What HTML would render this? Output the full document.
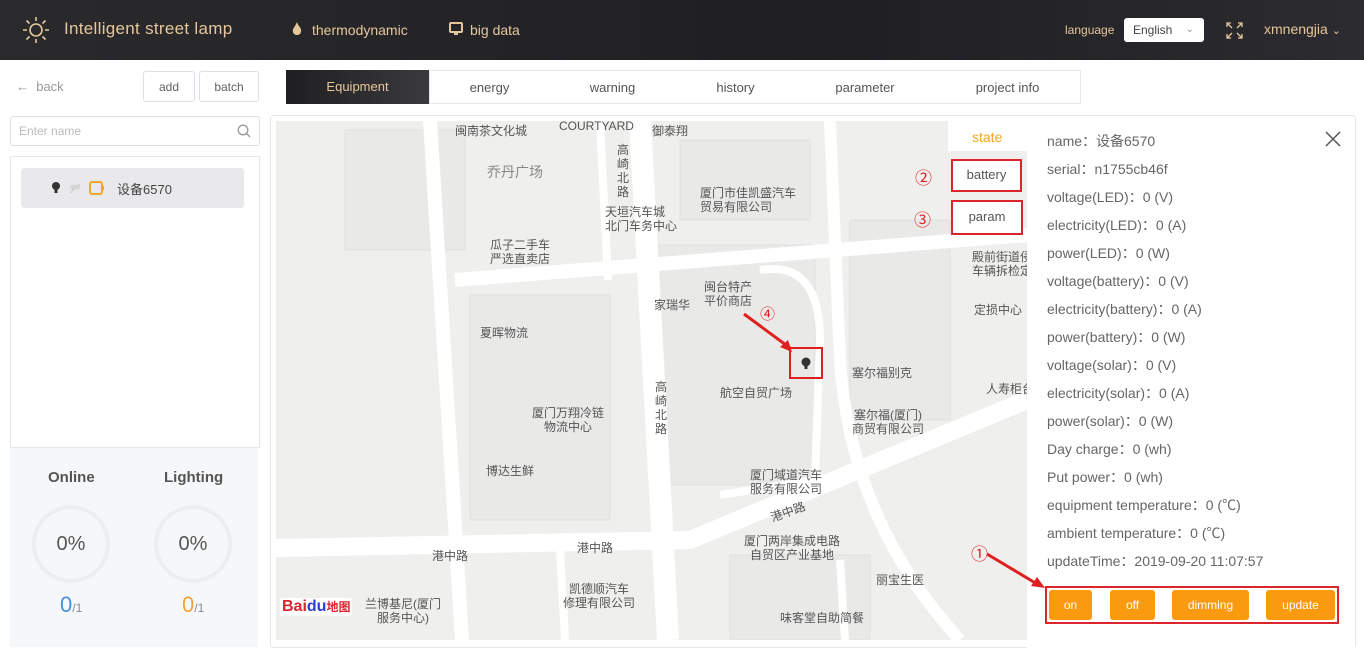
<!DOCTYPE html>
<html><head><meta charset="utf-8"><style>
*{box-sizing:border-box;margin:0;padding:0}
body{width:1364px;height:655px;overflow:hidden;background:#fff;font-family:"Liberation Sans","Noto Sans CJK SC",sans-serif;position:relative;color:#606266}
.abs{position:absolute}
.hdr{left:0;top:0;width:1364px;height:60px;background:linear-gradient(90deg,#2a2a2d,#1f1f22 60%,#2c2c30)}
.gold{color:#e6c79c}
.btn{position:absolute;border:1px solid #dcdfe6;border-radius:3px;background:#fff;font-size:12px;color:#606266;text-align:center;line-height:30px}
.tab{position:absolute;top:70px;height:34px;border:1px solid #e4e7ed;border-left:none;font-size:13px;color:#555;text-align:center;line-height:34px;background:#fff}
.info{position:absolute;left:1047px;font-size:14px;color:#666;white-space:nowrap}
.ob{position:absolute;top:590px;height:30px;background:#fa9a0f;color:#fff;font-size:12px;text-align:center;line-height:30px;border-radius:3px}
.lbl{position:absolute;font-size:12px;color:#555;line-height:14px;text-align:center;white-space:nowrap}
.circ{position:absolute;width:78px;height:78px;border:4px solid #eceef1;border-radius:50%;text-align:center;line-height:70px;font-size:20px;color:#555}
</style></head><body>
<div class="abs hdr"></div>
<svg class="abs" style="left:22px;top:16px" width="28" height="28" viewBox="0 0 28 28" fill="none" stroke="#e6c79c" stroke-width="1.6"><circle cx="14" cy="14" r="6"/><path d="M14 1v4M14 23v4M1 14h4M23 14h4M4.5 4.5l3 3M20.5 20.5l3 3M4.5 23.5l3-3M20.5 7.5l3-3"/></svg>
<div class="abs gold" style="left:64px;top:19px;font-size:17px;letter-spacing:0.3px">Intelligent street lamp</div>
<svg class="abs" style="left:292px;top:22px" width="10" height="15" viewBox="0 0 10 15"><path d="M5 0C6 4 10 6 9 10C8 14 2 14 1 10C0 7 3 5 5 0Z" fill="#e6c79c"/></svg>
<div class="abs gold" style="left:312px;top:22px;font-size:14px">thermodynamic</div>
<svg class="abs" style="left:449px;top:22px" width="14" height="14" viewBox="0 0 14 14"><rect x="1" y="1" width="12" height="9" rx="1" fill="none" stroke="#e6c79c" stroke-width="2"/><path d="M5 12h4" stroke="#e6c79c" stroke-width="2"/></svg>
<div class="abs gold" style="left:470px;top:22px;font-size:14px">big data</div>
<div class="abs gold" style="left:1065px;top:23px;font-size:12px">language</div>
<div class="abs" style="left:1124px;top:18px;width:80px;height:24px;background:#fff;border-radius:3px;font-size:12px;color:#444;line-height:24px;padding-left:9px">English <span style="position:absolute;right:10px;color:#999;font-size:10px">&#8964;</span></div>
<svg class="abs" style="left:1226px;top:22px" width="17" height="17" viewBox="0 0 17 17" fill="none" stroke="#e6c79c" stroke-width="1.3"><path d="M1 5V1h4M1 1l5 5M16 5V1h-4M16 1l-5 5M1 12v4h4M1 16l5-5M16 12v4h-4M16 16l-5-5"/></svg>
<div class="abs gold" style="left:1264px;top:21px;font-size:14px">xmnengjia <span style="font-size:11px">&#8964;</span></div>

<div class="abs" style="left:16px;top:79px;font-size:13px;color:#999">&larr;&nbsp; back</div>
<div class="btn" style="left:143px;top:71px;width:52px;height:31px">add</div>
<div class="btn" style="left:199px;top:71px;width:60px;height:31px">batch</div>
<div class="abs" style="left:10px;top:116px;width:250px;height:30px;border:1px solid #dcdfe6;border-radius:3px;font-size:12px;color:#bbb;line-height:28px;padding-left:8px">Enter name</div>
<svg class="abs" style="left:237px;top:124px" width="14" height="14" viewBox="0 0 14 14" fill="none" stroke="#999" stroke-width="1.3"><circle cx="6" cy="6" r="4.8"/><path d="M9.5 9.5L13 13"/></svg>
<div class="abs" style="left:10px;top:156px;width:250px;height:292px;border:1px solid #e8e8e8"></div>
<div class="abs" style="left:21px;top:168px;width:223px;height:40px;background:#e9e9eb;border-radius:3px"></div>
<svg class="abs" style="left:50px;top:180px" width="56" height="16" viewBox="0 0 56 16"><circle cx="6" cy="6" r="4" fill="#333"/><rect x="4.5" y="9" width="3" height="4" fill="#333"/><path d="M20 8a6 6 0 0 1 10 0M22 10a3 3 0 0 1 6 0M20 13L30 4" stroke="#ccc" stroke-width="1.2" fill="none"/><rect x="40" y="2" width="12" height="12" rx="2" fill="none" stroke="#f5a623" stroke-width="2"/><rect x="52" y="6" width="2" height="4" fill="#f5a623"/></svg>
<div class="abs" style="left:117px;top:179px;font-size:13px;color:#444">设备6570</div>
<div class="abs" style="left:10px;top:448px;width:248px;height:199px;background:#f6f7f9"></div>
<div class="abs" style="left:48px;top:469px;font-size:15px;font-weight:bold;color:#555">Online</div>
<div class="abs" style="left:164px;top:469px;font-size:15px;font-weight:bold;color:#555">Lighting</div>
<div class="circ" style="left:32px;top:505px">0%</div>
<div class="circ" style="left:154px;top:505px">0%</div>
<div class="abs" style="left:60px;top:592px;font-size:22px;color:#4a90d9">0<span style="font-size:12px;color:#888">/1</span></div>
<div class="abs" style="left:182px;top:592px;font-size:22px;color:#f0a33a">0<span style="font-size:12px;color:#888">/1</span></div>

<div class="tab" style="left:286px;width:143px;border:none;background:linear-gradient(90deg,#1f1f22,#3a3a3e);color:#e6c79c">Equipment</div>
<div class="tab" style="left:429px;width:121px;border-left:1px solid #e4e7ed">energy</div>
<div class="tab" style="left:549px;width:128px">warning</div>
<div class="tab" style="left:676px;width:120px">history</div>
<div class="tab" style="left:795px;width:141px">parameter</div>
<div class="tab" style="left:935px;width:146px">project info</div>

<div class="abs" style="left:270px;top:115px;width:1086px;height:533px;border:1px solid #e4e7ed;border-radius:3px"></div>
<svg class="abs" style="left:276px;top:121px" width="751" height="519" viewBox="276 121 751 519">
<rect x="276" y="121" width="751" height="519" fill="#efefed"/>
<g fill="#e9e9e8" stroke="#e0e0e0"><rect x="470" y="295" width="140" height="225"/><rect x="655" y="245" width="160" height="240"/><rect x="850" y="220" width="100" height="200"/><rect x="345" y="130" width="120" height="120"/><rect x="680" y="140" width="130" height="80"/><rect x="730" y="555" width="140" height="85"/></g>
<g stroke="#fff" fill="none" stroke-linecap="butt">
<path d="M430 121L462 640" stroke-width="14"/>
<path d="M640 121L668 640" stroke-width="22"/>
<path d="M455 280L1027 235" stroke-width="14"/>
<path d="M276 548L690 540L1027 400" stroke-width="18"/>
<path d="M830 121L840 360Q850 520 960 640" stroke-width="12"/>
<path d="M600 121L608 280" stroke-width="8"/>
<path d="M840 560L845 640M560 550L565 640M760 270Q820 260 820 340L815 480L720 495" stroke-width="8"/>
</g>
</svg>
<div class="lbl" style="left:455px;top:124px">闽南茶文化城</div><div class="lbl" style="left:559px;top:119px">COURTYARD</div><div class="lbl" style="left:652px;top:124px">御泰翔</div>
<div class="lbl" style="left:487px;top:165px;font-size:14px;color:#888">乔丹广场</div>
<div class="lbl" style="left:616px;top:143px;width:14px;white-space:normal">高崎北路</div>
<div class="lbl" style="left:700px;top:186px;text-align:left">厦门市佳凯盛汽车<br>贸易有限公司</div>
<div class="lbl" style="left:605px;top:205px;text-align:left">天垣汽车城<br>北门车务中心</div>
<div class="lbl" style="left:490px;top:238px">瓜子二手车<br>严选直卖店</div>
<div class="lbl" style="left:480px;top:326px">夏晖物流</div>
<div class="lbl" style="left:532px;top:406px">厦门万翔冷链<br>物流中心</div>
<div class="lbl" style="left:486px;top:464px">博达生鲜</div>
<div class="lbl" style="left:654px;top:298px">家瑞华</div>
<div class="lbl" style="left:704px;top:280px">闽台特产<br>平价商店</div>
<div class="lbl" style="left:654px;top:380px;width:14px;white-space:normal">高崎北路</div>
<div class="lbl" style="left:720px;top:386px">航空自贸广场</div>
<div class="lbl" style="left:852px;top:366px">塞尔福别克</div>
<div class="lbl" style="left:852px;top:408px">塞尔福(厦门)<br>商贸有限公司</div>
<div class="lbl" style="left:750px;top:468px">厦门域道汽车<br>服务有限公司</div>
<div class="lbl" style="left:972px;top:250px">殿前街道侵<br>车辆拆检定</div>
<div class="lbl" style="left:974px;top:303px">定损中心</div>
<div class="lbl" style="left:986px;top:382px">人寿柜台</div>
<div class="lbl" style="left:432px;top:549px">港中路</div><div class="lbl" style="left:577px;top:541px">港中路</div>
<div class="lbl" style="left:770px;top:505px;transform:rotate(-20deg)">港中路</div>
<div class="lbl" style="left:744px;top:534px">厦门两岸集成电路<br>自贸区产业基地</div>
<div class="lbl" style="left:876px;top:573px">丽宝生医</div>
<div class="lbl" style="left:563px;top:582px">凯德顺汽车<br>修理有限公司</div>
<div class="lbl" style="left:365px;top:597px">兰博基尼(厦门<br>服务中心)</div>
<div class="lbl" style="left:780px;top:611px">味客堂自助简餐</div>
<div class="abs" style="left:280px;top:598px;font-size:16px;font-weight:bold;color:#d9252b;background:#fff;padding:0 2px;border-radius:2px">Bai<span style="color:#2a3fd6">du</span><span style="font-size:12px">地图</span></div>
<div class="abs" style="left:789px;top:347px;width:34px;height:32px;border:2px solid #e02020"></div>
<svg class="abs" style="left:742px;top:312px" width="56" height="42"><path d="M2 2L48 36" stroke="#e02020" stroke-width="3"/><path d="M50 40L38 35L46 28Z" fill="#e02020"/></svg>
<div class="abs" style="left:760px;top:303px;font-size:15px;color:#e02020">④</div>
<svg class="abs" style="left:800px;top:356px" width="12" height="16"><circle cx="6" cy="6" r="4.5" fill="#333"/><rect x="4.5" y="9" width="3" height="4" fill="#333"/></svg>

<div class="abs" style="left:948px;top:121px;width:79px;height:30px;background:#fff"></div>
<div class="abs" style="left:972px;top:129px;font-size:14px;color:#f5a623">state</div>
<div class="abs" style="left:951px;top:159px;width:71px;height:33px;border:2.5px solid #d9252b;background:#fff;font-size:13px;color:#555;text-align:center;line-height:28px">battery</div>
<div class="abs" style="left:951px;top:200px;width:72px;height:35px;border:2.5px solid #d9252b;background:#fff;font-size:13px;color:#555;text-align:center;line-height:30px">param</div>
<div class="abs" style="left:915px;top:164px;font-size:17px;color:#e02020">②</div>
<div class="abs" style="left:914px;top:206px;font-size:17px;color:#e02020">③</div>

<div class="abs" style="left:1027px;top:121px;width:328px;height:527px;background:#fff"></div>
<svg class="abs" style="left:1324px;top:130px" width="18" height="18" stroke="#555" stroke-width="1.5"><path d="M2 2L16 16M16 2L2 16"/></svg>
<div class="info" style="top:131px">name：设备6570</div>
<div class="info" style="top:159px">serial：n1755cb46f</div>
<div class="info" style="top:187px">voltage(LED)：0 (V)</div>
<div class="info" style="top:215px">electricity(LED)：0 (A)</div>
<div class="info" style="top:243px">power(LED)：0 (W)</div>
<div class="info" style="top:271px">voltage(battery)：0 (V)</div>
<div class="info" style="top:299px">electricity(battery)：0 (A)</div>
<div class="info" style="top:327px">power(battery)：0 (W)</div>
<div class="info" style="top:355px">voltage(solar)：0 (V)</div>
<div class="info" style="top:383px">electricity(solar)：0 (A)</div>
<div class="info" style="top:411px">power(solar)：0 (W)</div>
<div class="info" style="top:439px">Day charge：0 (wh)</div>
<div class="info" style="top:467px">Put power：0 (wh)</div>
<div class="info" style="top:495px">equipment temperature：0 (℃)</div>
<div class="info" style="top:523px">ambient temperature：0 (℃)</div>
<div class="info" style="top:551px">updateTime：2019-09-20 11:07:57</div>
<div class="abs" style="left:1045px;top:586px;width:294px;height:38px;border:2.5px solid #d9252b"></div>
<div class="ob" style="left:1049px;width:43px">on</div>
<div class="ob" style="left:1110px;width:45px">off</div>
<div class="ob" style="left:1172px;width:77px">dimming</div>
<div class="ob" style="left:1266px;width:69px">update</div>
<div class="abs" style="left:971px;top:540px;font-size:17px;color:#e02020">①</div>
<svg class="abs" style="left:985px;top:552px" width="62" height="38"><path d="M2 2L52 32" stroke="#e02020" stroke-width="3"/><path d="M60 36L46 34L52 25Z" fill="#e02020"/></svg>
</body></html>
